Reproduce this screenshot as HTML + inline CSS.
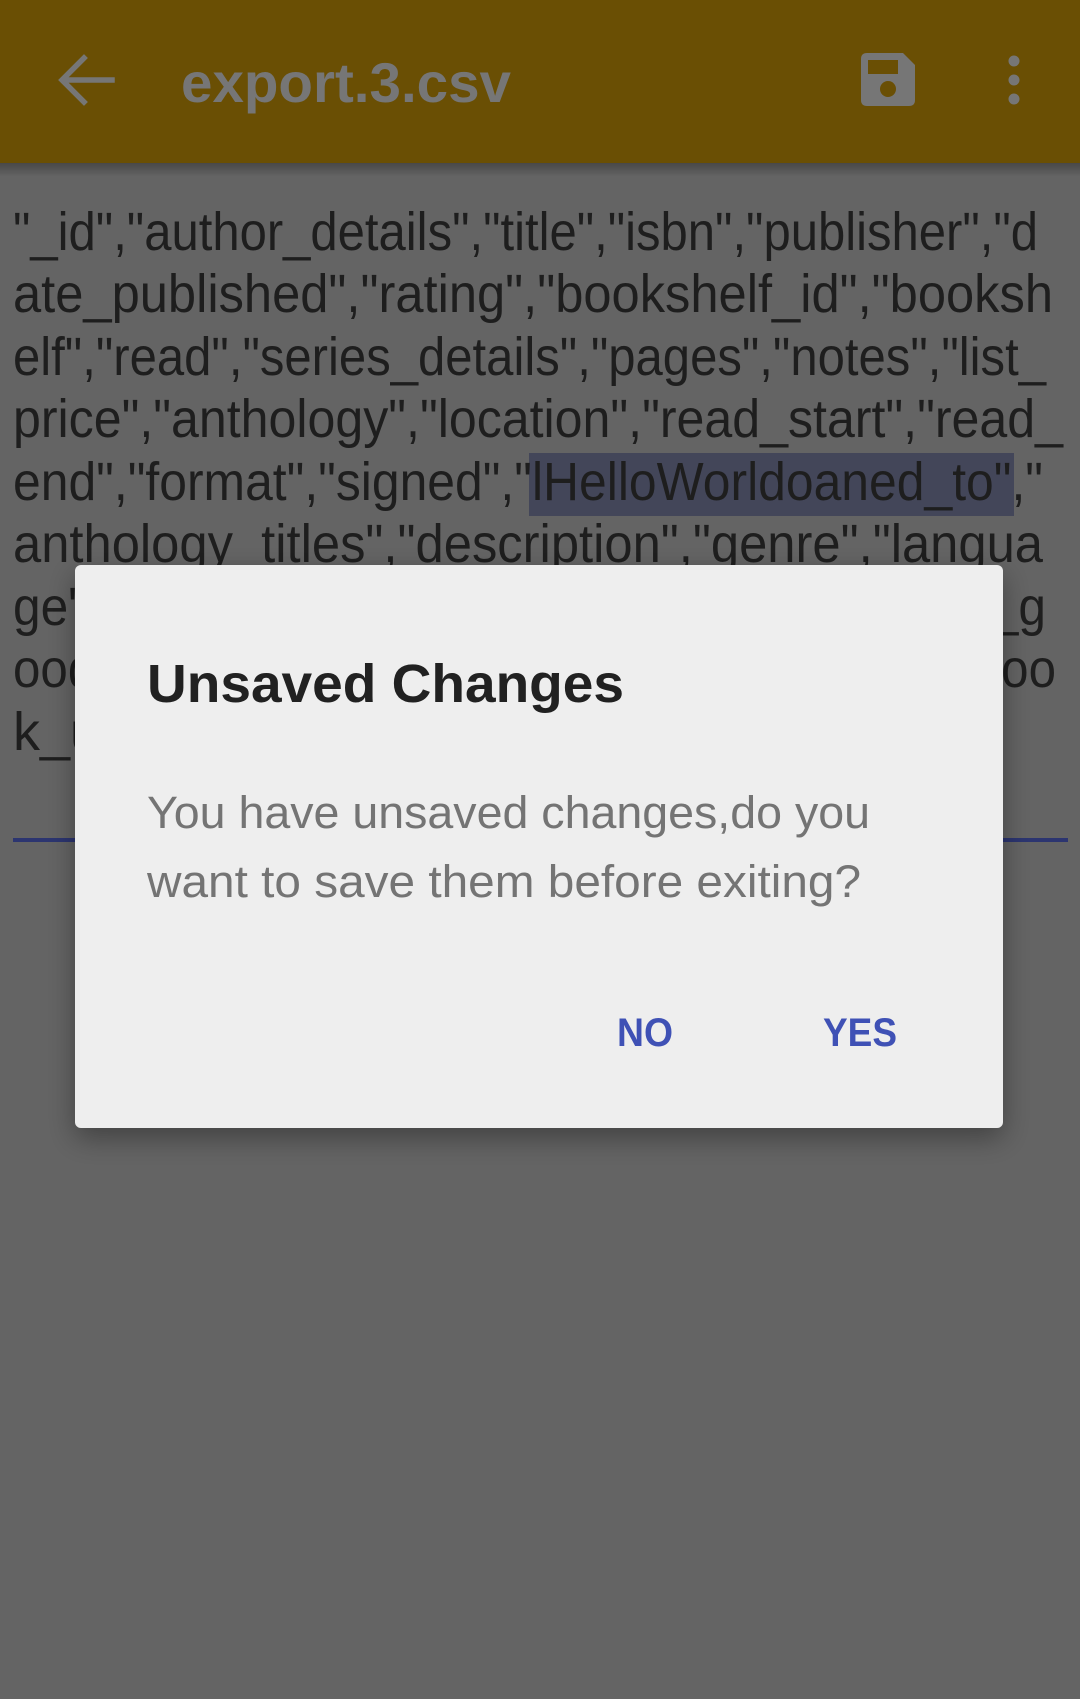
<!DOCTYPE html>
<html><head><meta charset="utf-8"><style>
html,body{margin:0;padding:0;width:1080px;height:1699px;overflow:hidden;background:#646464;}
svg{display:block}
</style></head><body>
<svg width="1080" height="1699" viewBox="0 0 1080 1699" xmlns="http://www.w3.org/2000/svg">
<defs>
<linearGradient id="sh" x1="0" y1="0" x2="0" y2="1"><stop offset="0" stop-color="#000" stop-opacity="0.28"/><stop offset="1" stop-color="#000" stop-opacity="0"/></linearGradient>
<filter id="ds" x="-10%" y="-10%" width="120%" height="130%"><feDropShadow dx="0" dy="10" stdDeviation="14" flood-color="#000" flood-opacity="0.35"/></filter>
</defs>
<rect width="1080" height="1699" fill="#646464"/>
<!-- app bar -->
<rect width="1080" height="163" fill="#6a4f04"/>
<rect y="163" width="1080" height="14" fill="url(#sh)"/>
<path d="M112 80 H64 M84 58 L62 80 L84 102" stroke="#767676" stroke-width="5.5" fill="none" stroke-linecap="square"/>
<text x="181" y="102" font-family="Liberation Sans, sans-serif" font-weight="bold" font-size="56" fill="#767676" textLength="330" lengthAdjust="spacingAndGlyphs">export.3.csv</text>
<path d="M861 59 Q861 53 867 53 H903 L915 65 V100 Q915 106 909 106 H867 Q861 106 861 100 Z" fill="#767676"/>
<rect x="868" y="60" width="30" height="14" fill="#6a4f04"/>
<circle cx="888" cy="89" r="8" fill="#6a4f04"/>
<circle cx="1014" cy="61" r="5.5" fill="#767676"/><circle cx="1014" cy="80" r="5.5" fill="#767676"/><circle cx="1014" cy="99" r="5.5" fill="#767676"/>
<!-- content -->
<rect x="529" y="453" width="485" height="63" fill="#434659"/>
<g font-family="Liberation Sans, sans-serif" font-size="54" fill="#1e1e1e">
<text x="13" y="250" textLength="1025" lengthAdjust="spacingAndGlyphs">"_id","author_details","title","isbn","publisher","d</text>
<text x="13" y="312" textLength="1040" lengthAdjust="spacingAndGlyphs">ate_published","rating","bookshelf_id","booksh</text>
<text x="13" y="375" textLength="1033" lengthAdjust="spacingAndGlyphs">elf","read","series_details","pages","notes","list_</text>
<text x="13" y="437" textLength="1050" lengthAdjust="spacingAndGlyphs">price","anthology","location","read_start","read_</text>
<text x="13" y="500" textLength="1030" lengthAdjust="spacingAndGlyphs">end","format","signed","lHelloWorldoaned_to","</text>
<text x="13" y="562" textLength="1030" lengthAdjust="spacingAndGlyphs">anthology_titles","description","genre","langua</text>
<text x="13" y="625" textLength="1033" lengthAdjust="spacingAndGlyphs">ge","date_added","goodreads_book_id","last_g</text>
<text x="13" y="687" textLength="1043" lengthAdjust="spacingAndGlyphs">oodreads_sync_date","date_last_updated","boo</text>
<text x="13" y="750">k_uuid"</text>
</g>
<rect x="13" y="838" width="1055" height="4" fill="#2c3570"/>
<!-- dialog -->
<rect x="75" y="565" width="928" height="563" rx="6" fill="#eeeeee" filter="url(#ds)"/>
<text x="147" y="702" font-family="Liberation Sans, sans-serif" font-weight="bold" font-size="54" fill="#212121" textLength="477" lengthAdjust="spacingAndGlyphs">Unsaved Changes</text>
<g font-family="Liberation Sans, sans-serif" font-size="45" fill="#747474">
<text x="147" y="828" textLength="723" lengthAdjust="spacingAndGlyphs">You have unsaved changes,do you</text>
<text x="147" y="897" textLength="714" lengthAdjust="spacingAndGlyphs">want to save them before exiting?</text>
</g>
<g font-family="Liberation Sans, sans-serif" font-weight="bold" font-size="40" fill="#3f51b5">
<text x="617" y="1046" textLength="56" lengthAdjust="spacingAndGlyphs">NO</text>
<text x="823" y="1046" textLength="74" lengthAdjust="spacingAndGlyphs">YES</text>
</g>
</svg>
</body></html>
